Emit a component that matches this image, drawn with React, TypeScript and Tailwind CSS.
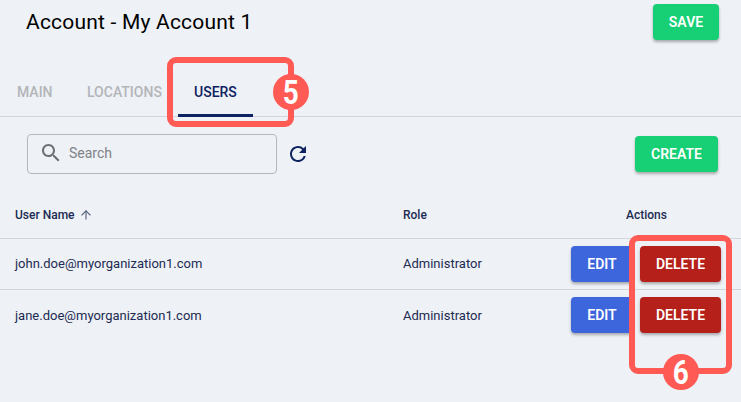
import React from 'react';
import { ArrowUp } from 'lucide-react';

const users = ['john.doe@myorganization1.com', 'jane.doe@myorganization1.com'];

const btn = 'flex items-center justify-center h-9 rounded-[4px] text-white text-sm font-semibold shadow-[0_2px_3px_rgba(0,0,0,0.3)]';

const Refresh = () => (
  <svg width="24" height="24" viewBox="0 0 24 24" className="text-[#0d2260]" fill="currentColor">
    <path d="M17.65 6.35A7.958 7.958 0 0 0 12 4c-4.42 0-7.99 3.58-7.99 8s3.57 8 7.99 8c3.73 0 6.84-2.55 7.73-6h-2.08A5.99 5.99 0 0 1 12 18c-3.31 0-6-2.69-6-6s2.69-6 6-6c1.66 0 3.14.69 4.22 1.78L13 11h7V4l-2.35 2.35z" />
  </svg>
);

const SearchIcon = () => (
  <svg width="24" height="24" viewBox="0 0 24 24" className="text-[#6d6f73]" fill="currentColor">
    <path d="M15.5 14h-.79l-.28-.27C15.41 12.59 16 11.11 16 9.5 16 5.91 13.09 3 9.5 3S3 5.91 3 9.5 5.91 16 9.5 16c1.61 0 3.09-.59 4.23-1.57l.27.28v.79l5 4.99L20.49 19l-4.99-5zm-6 0C7.01 14 5 11.99 5 9.5S7.01 5 9.5 5 14 7.01 14 9.5 11.99 14 9.5 14z" />
  </svg>
);

const Row = ({ email, last }: { email: string; last: boolean }) => (
  <div className={`flex items-center h-[51px] text-[13px] text-[#1c2b52] ${last ? '' : 'border-b border-[#d3d5db]'}`}>
    <div className="w-[403px] pl-[15px]">{email}</div>
    <div className="w-[168px]">Administrator</div>
    <div className="flex gap-[7px] pb-px">
      <button className={`${btn} w-[62px] bg-[#3d66dc]`}>EDIT</button>
      <button className={`${btn} w-[81px] bg-[#b5211a]`}>DELETE</button>
    </div>
  </div>
);

export default function App() {
  return (
    <div className="relative w-[741px] h-[402px] overflow-hidden bg-[#eef1f6] font-['Roboto',sans-serif]">
      {/* Title */}
      <div className="flex justify-between items-start h-[77px] pl-[26px] pr-[22px] pt-1">
        <h1 className="text-[21px] leading-9 text-black tracking-[0.2px]">Account - My Account 1</h1>
        <button className={`${btn} w-[66px] bg-[#17cf75]`}>SAVE</button>
      </div>

      {/* Tabs */}
      <div className="flex h-10 border-b border-[#d3d5db] text-sm font-medium">
        <div className="w-[87px] pl-[17px] pt-[5px] text-[#b3b5b9]">MAIN</div>
        <div className="w-[91px] pt-[5px] text-[#b3b5b9]">LOCATIONS</div>
        <div className="w-[75px] h-10 pt-[5px] pl-4 text-[#0d2260] border-b-[3px] border-[#0d2260]">USERS</div>
      </div>

      {/* Toolbar */}
      <div className="flex items-center h-[74px] pl-[27px] pr-[23px]">
        <div className="flex items-center w-[250px] h-10 border border-[#b3b6bc] rounded-[4px] pl-[11px] pb-[2px] gap-[6px] text-sm text-[#7f8287]">
          <SearchIcon />
          <span>Search</span>
        </div>
        <div className="ml-[9px]"><Refresh /></div>
        <button className={`${btn} ml-auto w-[83px] bg-[#17cf75]`}>CREATE</button>
      </div>

      {/* Table */}
      <div className="flex items-center h-[48px] border-b border-[#d3d5db] text-xs font-medium text-[#1c2b52]">
        <div className="flex items-center gap-[4px] w-[403px] pl-[15px]">
          User Name <ArrowUp size={14} className="text-[#5a6680]" />
        </div>
        <div className="w-[223px]">Role</div>
        <div>Actions</div>
      </div>
      {users.map((email, i) => (
        <Row key={email} email={email} last={i === users.length - 1} />
      ))}

      {/* Annotations */}
      <div className="absolute left-[167px] top-[57px] w-[127px] h-[70px] border-[6px] border-[#ff5a54] rounded-[9px]" />
      <div className="absolute left-[273px] top-[74px] w-9 h-9 rounded-full bg-[#ff5a54] flex items-center justify-center text-white text-[34px] leading-none font-bold">
        <span className="scale-x-[0.82]">5</span>
      </div>
      <div className="absolute left-[629px] top-[235px] w-[103px] h-[139px] border-[6px] border-[#ff5a54] rounded-[9px]" />
      <div className="absolute left-[663px] top-[354px] w-9 h-9 rounded-full bg-[#ff5a54] flex items-center justify-center text-white text-[34px] leading-none font-bold">
        <span className="scale-x-[0.82]">6</span>
      </div>
    </div>
  );
}
